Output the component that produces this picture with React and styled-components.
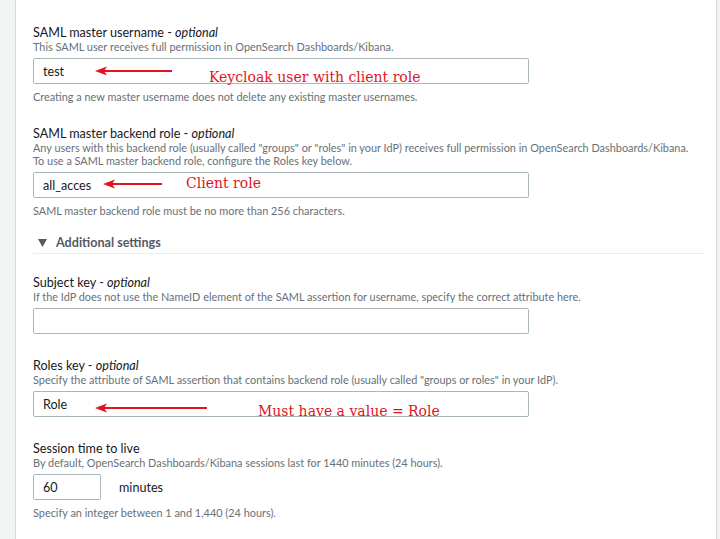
import React from "react";
import styled, { createGlobalStyle } from "styled-components";

const Global = createGlobalStyle`
  html, body { margin: 0; padding: 0; background: #f2f3f3; }
  body { font-family: Lato, "Open Sans", sans-serif; }
`;

const Page = styled.div`
  width: 720px;
  height: 539px;
  overflow: hidden;
  display: flex;
  background: #f2f3f3;
`;

const Card = styled.div`
  margin-left: 15px;
  width: 702px;
  border-left: 1px solid #d5dbdb;
  border-right: 1px solid #d5dbdb;
  background: #fff;
  padding: 25px 17px 0 17px;
  box-sizing: border-box;
  display: flex;
  flex-direction: column;
`;

const Field = styled.div`
  display: flex;
  flex-direction: column;
  margin-bottom: ${(p) => p.$mb || 0}px;
`;

const Label = styled.div`
  font-size: 12.6px;
  line-height: 15px;
  color: #16191f;
  font-weight: 400;
  & em { font-style: italic; }
`;

const Desc = styled.div`
  font-size: 10.9px;
  line-height: 13px;
  color: #687078;
  white-space: nowrap;
`;

const InputRow = styled.div`
  position: relative;
  display: flex;
  align-items: center;
  gap: 18px;
  margin: 5px 0 6px;
`;

const Input = styled.div`
  box-sizing: border-box;
  width: ${(p) => p.$w || 496}px;
  height: 26px;
  border: 1px solid #aab7b8;
  border-radius: 2px;
  padding: 0 9px;
  display: flex;
  align-items: center;
  font-size: 12.6px;
  color: #16191f;
`;

const Unit = styled.span`
  font-size: 12.6px;
  color: #16191f;
`;

const Note = styled.div`
  position: absolute;
  left: ${(p) => p.$x}px;
  top: ${(p) => p.$y}px;
  font-family: "DejaVu Serif", "Liberation Serif", serif;
  font-size: 14px;
  line-height: 16px;
  color: #e0141e;
  white-space: nowrap;
`;

const Arrow = styled.svg`
  position: absolute;
  left: ${(p) => p.$x}px;
  top: ${(p) => p.$y}px;
  overflow: visible;
`;

const Expander = styled.div`
  display: flex;
  align-items: center;
  gap: 9px;
  font-size: 12.6px;
  line-height: 15px;
  font-weight: 700;
  color: #545b64;
  padding: 0 0 3px 5px;
  border-bottom: 1px solid #eaeded;
  margin: 18px 0 21px;
  width: 667px;
`;

function RedArrow({ x, y, len }) {
  return (
    <Arrow $x={x} $y={y} width={len} height={10}>
      <line x1={len} y1={5} x2={8} y2={5} stroke="#e0141e" strokeWidth="2" />
      <polygon points={`0,5 12,0.5 9,5 12,9.5`} fill="#e0141e" />
    </Arrow>
  );
}

export default function App() {
  return (
    <>
      <Global />
      <Page>
        <Card>
          <Field $mb={23}>
            <Label>SAML master username - <em>optional</em></Label>
            <Desc>This SAML user receives full permission in OpenSearch Dashboards/Kibana.</Desc>
            <InputRow>
              <Input>test</Input>
              <RedArrow x={62} y={8} len={77} />
              <Note $x={176} $y={11}>Keycloak user with client role</Note>
            </InputRow>
            <Desc>Creating a new master username does not delete any existing master usernames.</Desc>
          </Field>

          <Field>
            <Label>SAML master backend role - <em>optional</em></Label>
            <Desc>Any users with this backend role (usually called "groups" or "roles" in your IdP) receives full permission in OpenSearch Dashboards/Kibana.</Desc>
            <Desc>To use a SAML master backend role, configure the Roles key below.</Desc>
            <InputRow>
              <Input>all_acces</Input>
              <RedArrow x={70} y={7} len={59} />
              <Note $x={153} $y={3}>Client role</Note>
            </InputRow>
            <Desc>SAML master backend role must be no more than 256 characters.</Desc>
          </Field>

          <Expander>
            <svg width="9" height="8" viewBox="0 0 9 8"><polygon points="0,0 9,0 4.5,8" fill="#545b64" /></svg>
            Additional settings
          </Expander>

          <Field $mb={18}>
            <Label>Subject key - <em>optional</em></Label>
            <Desc>If the IdP does not use the NameID element of the SAML assertion for username, specify the correct attribute here.</Desc>
            <InputRow>
              <Input />
            </InputRow>
          </Field>

          <Field $mb={18}>
            <Label>Roles key - <em>optional</em></Label>
            <Desc>Specify the attribute of SAML assertion that contains backend role (usually called "groups or roles" in your IdP).</Desc>
            <InputRow>
              <Input>Role</Input>
              <RedArrow x={62} y={12} len={112} />
              <Note $x={225} $y={12}>Must have a value = Role</Note>
            </InputRow>
          </Field>

          <Field>
            <Label>Session time to live</Label>
            <Desc>By default, OpenSearch Dashboards/Kibana sessions last for 1440 minutes (24 hours).</Desc>
            <InputRow>
              <Input $w={68}>60</Input>
              <Unit>minutes</Unit>
            </InputRow>
            <Desc>Specify an integer between 1 and 1,440 (24 hours).</Desc>
          </Field>
        </Card>
      </Page>
    </>
  );
}
